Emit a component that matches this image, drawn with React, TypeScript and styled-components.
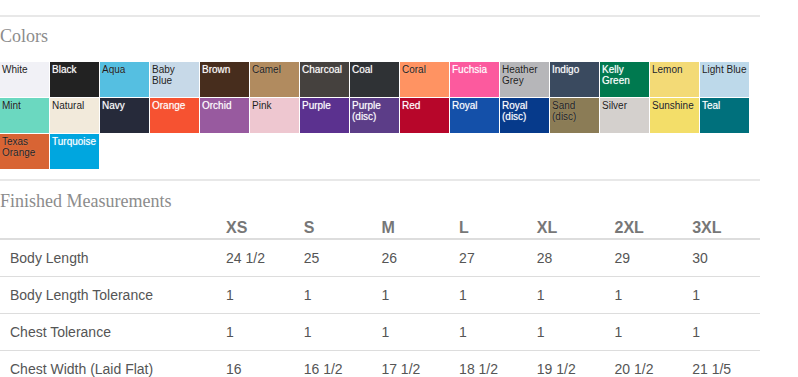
import React from "react";
import styled, { createGlobalStyle } from "styled-components";

const GlobalStyle = createGlobalStyle`
  html, body { margin: 0; padding: 0; background: #ffffff; }
  body { font-family: "Liberation Sans", Arial, sans-serif; }
`;

const Page = styled.div`
  width: 760px;
  display: flex;
  flex-direction: column;
`;

const Divider = styled.div<{ $top: number }>`
  margin-top: ${(p) => p.$top}px;
  height: 2px;
  background: #e8e8e8;
`;

const Heading = styled.h3<{ $top: number }>`
  margin: ${(p) => p.$top}px 0 0;
  font-family: "Liberation Serif", "Times New Roman", serif;
  font-weight: normal;
  font-size: 18px;
  line-height: 20px;
  color: #8c8c8c;
`;

const SwatchGrid = styled.div`
  margin-top: 16px;
  display: grid;
  grid-template-columns: repeat(15, 49px);
  grid-auto-rows: 35px;
  gap: 1px;
`;

const Swatch = styled.div<{ $bg: string; $light: boolean }>`
  background: ${(p) => p.$bg};
  color: ${(p) => (p.$light ? "#ffffff" : "#1c1c1c")};
  font-family: "Liberation Sans", Arial, sans-serif;
  font-size: 10px;
  line-height: 11px;
  padding: 2px 2px 0;
  box-sizing: border-box;
  overflow: hidden;
  text-shadow: ${(p) =>
    p.$light ? "0 0 1px rgba(255,255,255,0.55)" : "0 0 1px rgba(255,255,255,0.35)"};
`;

const Table = styled.table`
  margin-top: 6px;
  width: 760px;
  border-collapse: collapse;
  table-layout: fixed;
  font-family: "Liberation Sans", Arial, sans-serif;
`;

const HeadCell = styled.th`
  text-align: left;
  font-size: 16px;
  font-weight: bold;
  line-height: 21px;
  color: #777777;
  padding: 0 10px;
  border-bottom: 2px solid #dddddd;
  vertical-align: bottom;
`;

const Row = styled.tr<{ $first: boolean }>`
  border-top: ${(p) => (p.$first ? "0" : "1px solid #dddddd")};
`;

const Cell = styled.td`
  font-size: 14px;
  line-height: 20px;
  color: #555555;
  padding: 8px 10px;
  white-space: nowrap;
`;

type Color = { name: string; bg: string; light: boolean };

const colors: Color[] = [
  { name: "White", bg: "#f1f1f6", light: false },
  { name: "Black", bg: "#222222", light: true },
  { name: "Aqua", bg: "#55bfe1", light: false },
  { name: "Baby Blue", bg: "#c7d9e8", light: false },
  { name: "Brown", bg: "#472d1d", light: true },
  { name: "Camel", bg: "#b18b5f", light: false },
  { name: "Charcoal", bg: "#45413e", light: true },
  { name: "Coal", bg: "#2f3235", light: true },
  { name: "Coral", bg: "#ff9362", light: false },
  { name: "Fuchsia", bg: "#fc5a9e", light: true },
  { name: "Heather Grey", bg: "#b6b6b9", light: false },
  { name: "Indigo", bg: "#3a4a5f", light: true },
  { name: "Kelly Green", bg: "#00794f", light: true },
  { name: "Lemon", bg: "#f3da76", light: false },
  { name: "Light Blue", bg: "#bdd9ea", light: false },
  { name: "Mint", bg: "#6bd8c0", light: false },
  { name: "Natural", bg: "#f2eadb", light: false },
  { name: "Navy", bg: "#262a3a", light: true },
  { name: "Orange", bg: "#f65231", light: true },
  { name: "Orchid", bg: "#985a9f", light: true },
  { name: "Pink", bg: "#eec7d0", light: false },
  { name: "Purple", bg: "#5b318f", light: true },
  { name: "Purple (disc)", bg: "#5c3d88", light: true },
  { name: "Red", bg: "#b7062a", light: true },
  { name: "Royal", bg: "#1450a9", light: true },
  { name: "Royal (disc)", bg: "#063a8b", light: true },
  { name: "Sand (disc)", bg: "#8b7c56", light: false },
  { name: "Silver", bg: "#d4d0cd", light: false },
  { name: "Sunshine", bg: "#f3de69", light: false },
  { name: "Teal", bg: "#00707c", light: true },
  { name: "Texas Orange", bg: "#d86434", light: false },
  { name: "Turquoise", bg: "#00a6df", light: true },
];

const sizes = ["XS", "S", "M", "L", "XL", "2XL", "3XL"];

const rows: { label: string; values: string[] }[] = [
  { label: "Body Length", values: ["24 1/2", "25", "26", "27", "28", "29", "30"] },
  { label: "Body Length Tolerance", values: ["1", "1", "1", "1", "1", "1", "1"] },
  { label: "Chest Tolerance", values: ["1", "1", "1", "1", "1", "1", "1"] },
  {
    label: "Chest Width (Laid Flat)",
    values: ["16", "16 1/2", "17 1/2", "18 1/2", "19 1/2", "20 1/2", "21 1/5"],
  },
];

export default function App() {
  return (
    <>
      <GlobalStyle />
      <Page>
        <Divider $top={15} />
        <Heading $top={9}>Colors</Heading>
        <SwatchGrid>
          {colors.map((c) => (
            <Swatch key={c.name} $bg={c.bg} $light={c.light}>
              {c.name}
            </Swatch>
          ))}
        </SwatchGrid>
        <Divider $top={10} />
        <Heading $top={10}>Finished Measurements</Heading>
        <Table>
          <colgroup>
            <col style={{ width: 216 }} />
            {sizes.map((s) => (
              <col key={s} />
            ))}
          </colgroup>
          <thead>
            <tr>
              <HeadCell />
              {sizes.map((s) => (
                <HeadCell key={s}>{s}</HeadCell>
              ))}
            </tr>
          </thead>
          <tbody>
            {rows.map((r, i) => (
              <Row key={r.label} $first={i === 0}>
                <Cell>{r.label}</Cell>
                {r.values.map((v, j) => (
                  <Cell key={j}>{v}</Cell>
                ))}
              </Row>
            ))}
          </tbody>
        </Table>
      </Page>
    </>
  );
}
